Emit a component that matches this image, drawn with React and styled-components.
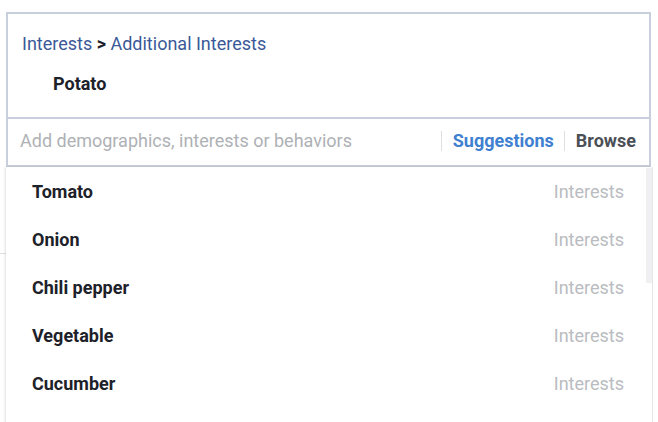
import React from "react";
import styled, { createGlobalStyle } from "styled-components";

const GlobalStyle = createGlobalStyle`
	html, body {
		margin: 0;
		padding: 0;
		background: #fff;
		font-family: Roboto, "Liberation Sans", sans-serif;
	}
`;

const Page = styled.div`
	position: relative;
	width: 658px;
	height: 422px;
	overflow: hidden;
	padding: 12px 0 0 6px;
	box-sizing: border-box;
`;

const Box = styled.div`
	width: 645px;
	border: 2px solid #c8cedb;
	box-sizing: border-box;
	background: #fff;
`;

const Header = styled.div`
	height: 105px;
	border-bottom: 2px solid #c8cedb;
	padding: 18px 0 0 14px;
	box-sizing: border-box;
`;

const Crumb = styled.div`
	font-size: 18px;
	color: #3b5998;
	line-height: 24px;
`;

const Arrow = styled.span`
	color: #1d2129;
	font-weight: 700;
`;

const Selected = styled.div`
	margin: 17px 0 0 31px;
	font-size: 18px;
	font-weight: 700;
	color: #1d2129;
	line-height: 22px;
`;

const InputRow = styled.div`
	height: 46px;
	display: flex;
	align-items: center;
	padding: 0 13px 3px 12px;
	box-sizing: border-box;
`;

const Input = styled.input`
	flex: 1;
	min-width: 0;
	border: none;
	outline: none;
	font: inherit;
	font-size: 18px;
	color: #1d2129;
	padding: 0;
	&::placeholder {
		color: #aeb1b5;
	}
`;

const Sep = styled.span`
	width: 1px;
	height: 20px;
	background: #dddfe2;
	margin: 0 11px 0 10px;
`;

const Tab = styled.span`
	font-size: 18px;
	font-weight: 700;
	color: ${(p) => (p.active ? "#4080d0" : "#4b4f56")};
`;

const Below = styled.div`
	margin: 86px 0 0 -6px;
	width: 12px;
	border-top: 1px solid #dddfe2;
`;

const Dropdown = styled.div`
	position: absolute;
	top: 167px;
	left: 6px;
	width: 646px;
	height: 270px;
	background: #fff;
	box-shadow: -1px 0 2px rgba(0, 0, 0, 0.12), 1px 0 0 #e6e6e6;
`;

const Scroll = styled.div`
	position: absolute;
	top: 1px;
	right: 0;
	width: 6px;
	height: 115px;
	background: #f0f0f2;
`;

const Row = styled.div`
	height: 48px;
	display: flex;
	align-items: center;
	justify-content: space-between;
	padding: 0 28px 0 26px;
`;

const Name = styled.span`
	font-size: 18px;
	font-weight: 700;
	color: #1d2129;
`;

const Kind = styled.span`
	font-size: 18px;
	color: #b9bcc0;
`;

const items = ["Tomato", "Onion", "Chili pepper", "Vegetable", "Cucumber"];

const App = () => {
	return (
		<Page>
			<GlobalStyle />
			<Box>
				<Header>
					<Crumb>
						Interests <Arrow>&gt;</Arrow> Additional Interests
					</Crumb>
					<Selected>Potato</Selected>
				</Header>
				<InputRow>
					<Input placeholder="Add demographics, interests or behaviors" />
					<Sep />
					<Tab active>Suggestions</Tab>
					<Sep />
					<Tab>Browse</Tab>
				</InputRow>
			</Box>
			<Below />
			<Dropdown>
				<Scroll />
				{items.map((item) => (
					<Row key={item}>
						<Name>{item}</Name>
						<Kind>Interests</Kind>
					</Row>
				))}
			</Dropdown>
		</Page>
	);
};

export default App;
